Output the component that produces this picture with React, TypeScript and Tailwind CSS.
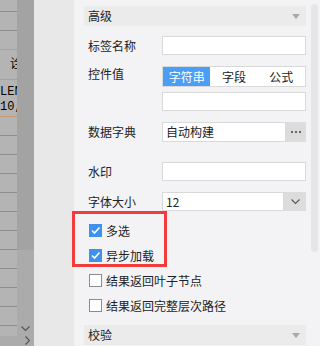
import React from "react";

const font = { fontFamily: '"Noto Sans CJK SC", "Noto Sans", sans-serif' };

function Caret() {
  return (
    <svg width="8" height="5" viewBox="0 0 8 5" className="mr-[6px]">
      <path d="M0 0 L8 0 L4 5 Z" fill="#a9a9a9" />
    </svg>
  );
}

function Header({ title }: { title: string }) {
  return (
    <div className="h-[20px] bg-[#ebebeb] flex items-center justify-between pl-[4px]">
      <span className="text-[12px] text-[#222] leading-none">{title}</span>
      <Caret />
    </div>
  );
}

function Input({ children }: { children?: React.ReactNode }) {
  return (
    <div className="flex-1 h-[19px] bg-white border border-[#d9d9d9] flex items-center pl-[3px] text-[12px] text-[#222] leading-none">
      {children}
    </div>
  );
}

function Label({ text, className = "" }: { text: string; className?: string }) {
  return (
    <div className={"w-[78px] shrink-0 pl-[4px] text-[12px] text-[#222] leading-none " + className}>{text}</div>
  );
}

function Check({ checked, text }: { checked: boolean; text: string }) {
  return (
    <div className="flex items-center h-[13px] pl-[5px]">
      {checked ? (
        <div className="w-[13px] h-[13px] bg-[#3e91ee] flex items-center justify-center">
          <svg width="11" height="11" viewBox="0 0 11 11">
            <path d="M2 5.5 L4.5 8 L9.5 2.5" stroke="white" strokeWidth="1.6" fill="none" />
          </svg>
        </div>
      ) : (
        <div className="w-[13px] h-[13px] bg-white border border-[#8c8c8c]" />
      )}
      <span className="ml-[4px] text-[12px] text-[#222] leading-none">{text}</span>
    </div>
  );
}

export default function App() {
  const lines = [11, 30, 49, 79, 116, 135, 154, 173, 192, 211, 230, 249, 268, 287, 306, 325];
  const orange = [49, 79, 116];
  return (
    <div className="relative flex w-[320px] h-[346px] overflow-hidden bg-[#f3f3f5]" style={font}>
      {/* spreadsheet strip */}
      <div className="relative w-[17px] h-full bg-[#b4b4b4] overflow-hidden">
        {lines.map((y) => (
          <div
            key={y}
            className={"absolute left-0 w-full h-px " + (orange.includes(y) ? "bg-[#c79a6e]" : "bg-[#8e8e8e]")}
            style={{ top: y }}
          />
        ))}
        <div className="absolute left-[10px] top-[57px] text-[12px] leading-none text-black" style={{ fontFamily: '"Noto Sans CJK SC", sans-serif' }}>诠</div>
        <div className="absolute left-0 top-[86px] text-[12px] leading-none text-black" style={{ fontFamily: '"Liberation Mono", monospace' }}>LEN</div>
        <div className="absolute left-0 top-[101px] text-[12px] leading-none text-black" style={{ fontFamily: '"Liberation Mono", monospace' }}>10,</div>
        <div className="absolute left-0 top-[336px] w-full h-[10px] bg-[#ababab]" />
      </div>
      {/* scrollbar */}
      <div className="w-[17px] h-full flex flex-col">
        <div className="h-[250px] bg-[#a3a3a3]" />
        <div className="flex-1 bg-[#ababab] flex flex-col">
          <div className="flex-1" />
          <div className="h-[14px] flex items-center justify-center">
            <svg width="9" height="6" viewBox="0 0 9 6"><path d="M0.5 0.5 L4.5 4.5 L8.5 0.5" stroke="#555" strokeWidth="1.2" fill="none" /></svg>
          </div>
          <div className="h-[10px] flex items-start justify-center pl-[4px]">
            <svg width="5" height="9" viewBox="0 0 5 9"><path d="M0.5 0.5 L4.5 4.5 L0.5 8.5" stroke="#555" strokeWidth="1.2" fill="none" /></svg>
          </div>
        </div>
      </div>
      {/* gray gap */}
      <div className="w-[40px] h-full bg-[#e8e8e8]" />
      {/* property panel */}
      <div className="relative flex-1 h-full bg-[#f3f3f5] pt-[6px] pl-[10px] pr-[14px] flex flex-col">
        <Header title="高级" />
        <div className="flex items-center mt-[10px]">
          <Label text="标签名称" />
          <Input />
        </div>
        <div className="flex items-start mt-[11px]">
          <Label text="控件值" className="pt-[2px]" />
          <div className="flex-1 flex flex-col">
            <div className="h-[21px] border border-[#d9d9d9] bg-white flex text-[12px] leading-none">
              <div className="flex-1 bg-[#4a9ef5] text-white flex items-center justify-center">字符串</div>
              <div className="flex-1 text-[#222] flex items-center justify-center">字段</div>
              <div className="flex-1 text-[#222] flex items-center justify-center">公式</div>
            </div>
            <div className="flex mt-[5px]">
              <Input />
            </div>
          </div>
        </div>
        <div className="flex items-center mt-[11px]">
          <Label text="数据字典" />
          <div className="flex-1 flex h-[20px]">
            <div className="flex-1 bg-white border border-[#d9d9d9] flex items-center pl-[3px] text-[12px] text-[#222] leading-none">自动构建</div>
            <div className="w-[20px] bg-[#dcdcdc] flex items-center justify-center">
              <svg width="11" height="3" viewBox="0 0 11 3">
                <rect x="0" y="0" width="2" height="2" fill="#666" />
                <rect x="4" y="0" width="2" height="2" fill="#666" />
                <rect x="8" y="0" width="2" height="2" fill="#666" />
              </svg>
            </div>
          </div>
        </div>
        <div className="flex items-center mt-[20px]">
          <Label text="水印" />
          <Input />
        </div>
        <div className="flex items-center mt-[11px]">
          <Label text="字体大小" />
          <div className="flex-1 flex h-[19px]">
            <div className="flex-1 bg-white border border-[#d9d9d9] flex items-center pl-[3px] text-[12px] text-[#222] leading-none">12</div>
            <div className="w-[22px] bg-[#dcdcdc] flex items-center justify-center">
              <svg width="9" height="6" viewBox="0 0 9 6"><path d="M0.5 0.5 L4.5 4.5 L8.5 0.5" stroke="#555" strokeWidth="1.1" fill="none" /></svg>
            </div>
          </div>
        </div>
        <div className="flex flex-col gap-[12px] mt-[13px]">
          <Check checked text="多选" />
          <Check checked text="异步加载" />
          <Check checked={false} text="结果返回叶子节点" />
          <Check checked={false} text="结果返回完整层次路径" />
        </div>
        <div className="mt-[13px]">
          <Header title="校验" />
        </div>
        {/* panel scrollbar */}
        <div className="absolute right-[2px] top-[4px] w-[7px] h-[248px] rounded-[4px] bg-[#e6e6e6]" />
      </div>
      {/* highlight box */}
      <div className="absolute left-[72px] top-[211px] w-[95px] h-[56px] border-[3px] border-[#f23c3c]" />
    </div>
  );
}
